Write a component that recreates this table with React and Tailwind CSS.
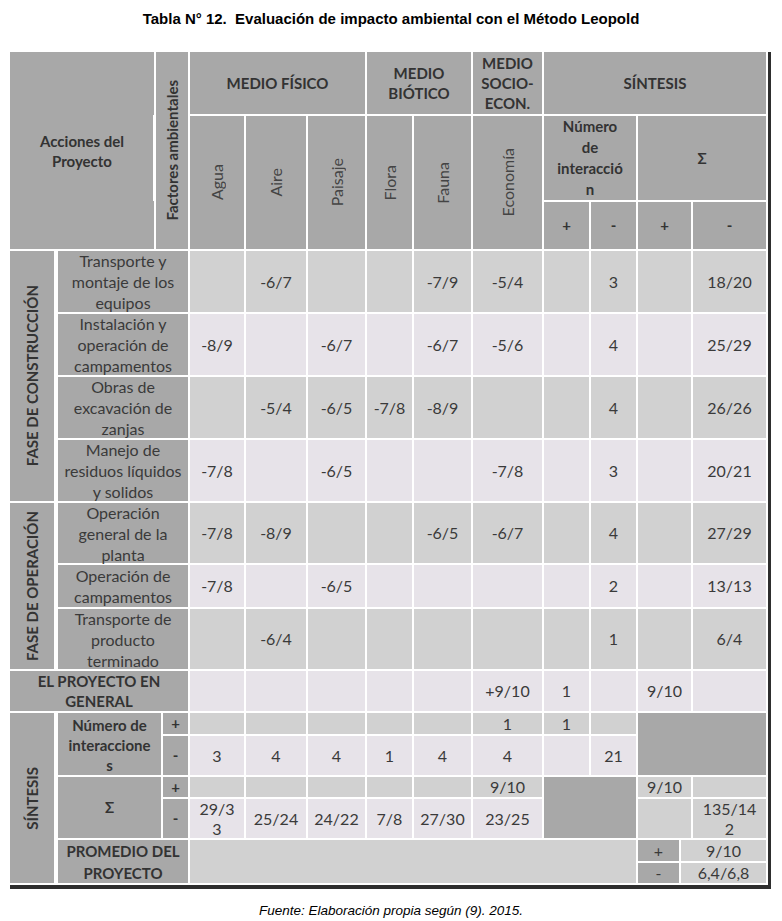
import React from "react";

const HD = "bg-[#a8a8a8]";
const GR = "bg-[#d1d1d1]";
const LT = "bg-[#e7e3e9]";

const Cell = ({ className = "", children }) => (
  <div
    className={`flex items-center justify-center text-center border-r-2 border-b-2 border-white ${className}`}
  >
    {children}
  </div>
);

const VText = ({ className = "", children }) => (
  <span className={`[writing-mode:vertical-rl] rotate-180 whitespace-nowrap ${className}`}>
    {children}
  </span>
);

const Lines = ({ items }) => (
  <span>
    {items.map((t, i) => (
      <React.Fragment key={i}>
        {t}
        {i < items.length - 1 && <br />}
      </React.Fragment>
    ))}
  </span>
);

const construccion = [
  { bg: GR, label: ["Transporte y", "montaje de los", "equipos"], vals: ["", "-6/7", "", "", "-7/9", "-5/4", "", "3", "", "18/20"] },
  { bg: LT, label: ["Instalación y", "operación de", "campamentos"], vals: ["-8/9", "", "-6/7", "", "-6/7", "-5/6", "", "4", "", "25/29"] },
  { bg: GR, label: ["Obras de", "excavación de", "zanjas"], vals: ["", "-5/4", "-6/5", "-7/8", "-8/9", "", "", "4", "", "26/26"] },
  { bg: LT, label: ["Manejo de", "residuos líquidos", "y solidos"], vals: ["-7/8", "", "-6/5", "", "", "-7/8", "", "3", "", "20/21"] },
];

const operacion = [
  { bg: GR, label: ["Operación", "general de la", "planta"], vals: ["-7/8", "-8/9", "", "", "-6/5", "-6/7", "", "4", "", "27/29"] },
  { bg: LT, label: ["Operación de", "campamentos"], vals: ["-7/8", "", "-6/5", "", "", "", "", "2", "", "13/13"] },
  { bg: GR, label: ["Transporte de", "producto", "terminado"], vals: ["", "-6/4", "", "", "", "", "", "1", "", "6/4"] },
];

const DataCells = ({ bg, vals }) =>
  vals.map((v, i) => (
    <Cell key={i} className={`${bg} ${i === 8 ? "col-span-2" : ""}`}>
      {v}
    </Cell>
  ));

const PhaseRows = ({ title, rows, span }) => (
  <>
    {rows.map((r, idx) => (
      <React.Fragment key={idx}>
        {idx === 0 && (
          <Cell className={`${HD} ${span} border-r-[4px]`}>
            <VText className="font-bold text-[15px] text-[#333]">{title}</VText>
          </Cell>
        )}
        <Cell className={`${HD} col-span-3 leading-[21px]`}>
          <Lines items={r.label} />
        </Cell>
        <DataCells bg={r.bg} vals={r.vals} />
      </React.Fragment>
    ))}
  </>
);

export default function App() {
  return (
    <div className="w-[782px] min-h-[921px] bg-white font-['Lato',sans-serif] text-[16px] text-[#3a3a3a]">
      <h1 className="pt-[10px] pb-[24px] text-center font-['Liberation_Sans',Arial,sans-serif] font-bold text-[15px] leading-[18px] text-black">
        Tabla N° 12.&nbsp; Evaluación de impacto ambiental con el Método Leopold
      </h1>

      <div className="ml-[10px] w-[761px] border-r-[3px] border-b-[4px] border-[#2e2e2e]">
        <div className="grid grid-cols-[48px_98px_7px_27px_56px_62px_59px_47px_59px_71px_47px_47px_43px_12px_75px] grid-rows-[64px_86px_49px_63px_63px_63px_63px_62px_44px_62px_42px_23px_41px_22px_41px_23px_22px]">
          {/* header row 1 */}
          <Cell className={`${HD} col-span-2 row-span-3 font-bold text-[15px] leading-[20px] text-[#333]`}>
            <Lines items={["Acciones del", "Proyecto"]} />
          </Cell>
          <Cell className={`${HD} col-span-2 row-span-3 relative`}>
            <span className="absolute left-[-3px] top-[63px] h-[86px] w-[3px] bg-white" />
            <VText className="font-bold text-[15px] text-[#333]">Factores ambientales</VText>
          </Cell>
          <Cell className={`${HD} col-span-3 font-bold text-[15px] text-[#333]`}>MEDIO FÍSICO</Cell>
          <Cell className={`${HD} col-span-2 font-bold text-[15px] leading-[20px] text-[#333]`}>
            <Lines items={["MEDIO", "BIÓTICO"]} />
          </Cell>
          <Cell className={`${HD} font-bold text-[15px] leading-[20px] text-[#333]`}>
            <Lines items={["MEDIO", "SOCIO-", "ECON."]} />
          </Cell>
          <Cell className={`${HD} col-span-5 font-bold text-[15px] text-[#333]`}>SÍNTESIS</Cell>

          {/* header row 2 */}
          {["Agua", "Aire", "Paisaje", "Flora", "Fauna", "Economía"].map((t) => (
            <Cell key={t} className={`${HD} row-span-2`}>
              <VText className="text-[16px] text-[#444]">{t}</VText>
            </Cell>
          ))}
          <Cell className={`${HD} col-span-2 font-bold text-[15px] leading-[21px] text-[#333]`}>
            <Lines items={["Número", "de", "interacció", "n"]} />
          </Cell>
          <Cell className={`${HD} col-span-3 font-bold text-[15px] text-[#333]`}>Σ</Cell>

          {/* header row 3 */}
          <Cell className={`${HD} font-bold text-[15px] text-[#333]`}>+</Cell>
          <Cell className={`${HD} font-bold text-[15px] text-[#333]`}>-</Cell>
          <Cell className={`${HD} col-span-2 font-bold text-[15px] text-[#333]`}>+</Cell>
          <Cell className={`${HD} font-bold text-[15px] text-[#333]`}>-</Cell>

          <PhaseRows title="FASE DE CONSTRUCCIÓN" rows={construccion} span="row-span-4" />
          <PhaseRows title="FASE DE OPERACIÓN" rows={operacion} span="row-span-3" />

          {/* el proyecto en general */}
          <Cell className={`${HD} col-span-4 font-bold text-[15px] leading-[20px] text-[#333]`}>
            <Lines items={["EL PROYECTO EN", "GENERAL"]} />
          </Cell>
          <DataCells bg={LT} vals={["", "", "", "", "", "+9/10", "1", "", "9/10", ""]} />

          {/* síntesis: número de interacciones + */}
          <Cell className={`${HD} row-span-6 border-r-[4px]`}>
            <VText className="font-bold text-[15px] text-[#333]">SÍNTESIS</VText>
          </Cell>
          <Cell className={`${HD} col-span-2 row-span-2 items-start pt-[2px] font-bold text-[15px] leading-[20px] text-[#333]`}>
            <Lines items={["Número de", "interaccione", "s"]} />
          </Cell>
          <Cell className={`${HD} font-bold text-[15px] text-[#333]`}>+</Cell>
          {["", "", "", "", "", "1", "1", ""].map((v, i) => (
            <Cell key={i} className={`${GR} leading-[20px]`}>{v}</Cell>
          ))}
          <Cell className={`${HD} col-span-3 row-span-2`} />

          {/* número de interacciones - */}
          <Cell className={`${HD} font-bold text-[15px] text-[#333]`}>-</Cell>
          {["3", "4", "4", "1", "4", "4", "", "21"].map((v, i) => (
            <Cell key={i} className={LT}>{v}</Cell>
          ))}

          {/* Σ + */}
          <Cell className={`${HD} col-span-2 row-span-2 font-bold text-[15px] text-[#333]`}>Σ</Cell>
          <Cell className={`${HD} font-bold text-[15px] text-[#333]`}>+</Cell>
          {["", "", "", "", "", "9/10"].map((v, i) => (
            <Cell key={i} className={`${GR} leading-[20px]`}>{v}</Cell>
          ))}
          <Cell className={`${HD} col-span-2 row-span-2`} />
          <Cell className={`${GR} col-span-2 leading-[20px]`}>9/10</Cell>
          <Cell className={GR} />

          {/* Σ - */}
          <Cell className={`${HD} font-bold text-[15px] text-[#333]`}>-</Cell>
          <Cell className={`${LT} leading-[20px]`}>
            <Lines items={["29/3", "3"]} />
          </Cell>
          {["25/24", "24/22", "7/8", "27/30", "23/25"].map((v, i) => (
            <Cell key={i} className={LT}>{v}</Cell>
          ))}
          <Cell className={`${GR} col-span-2`} />
          <Cell className={`${GR} leading-[20px]`}>
            <Lines items={["135/14", "2"]} />
          </Cell>

          {/* promedio */}
          <Cell className={`${HD} col-span-3 row-span-2 font-bold text-[15px] leading-[22px] text-[#333]`}>
            <Lines items={["PROMEDIO DEL", "PROYECTO"]} />
          </Cell>
          <Cell className={`${GR} col-span-8 row-span-2`} />
          <Cell className={`${HD} leading-[20px]`}>+</Cell>
          <Cell className={`${GR} col-span-2 leading-[20px]`}>9/10</Cell>
          <Cell className={`${HD} leading-[20px]`}>-</Cell>
          <Cell className={`${GR} col-span-2 leading-[20px]`}>6,4/6,8</Cell>
        </div>
      </div>

      <p className="pt-[12px] text-center font-['Liberation_Sans',Arial,sans-serif] italic text-[13.5px] text-black">
        Fuente: Elaboración propia según (9). 2015.
      </p>
    </div>
  );
}
